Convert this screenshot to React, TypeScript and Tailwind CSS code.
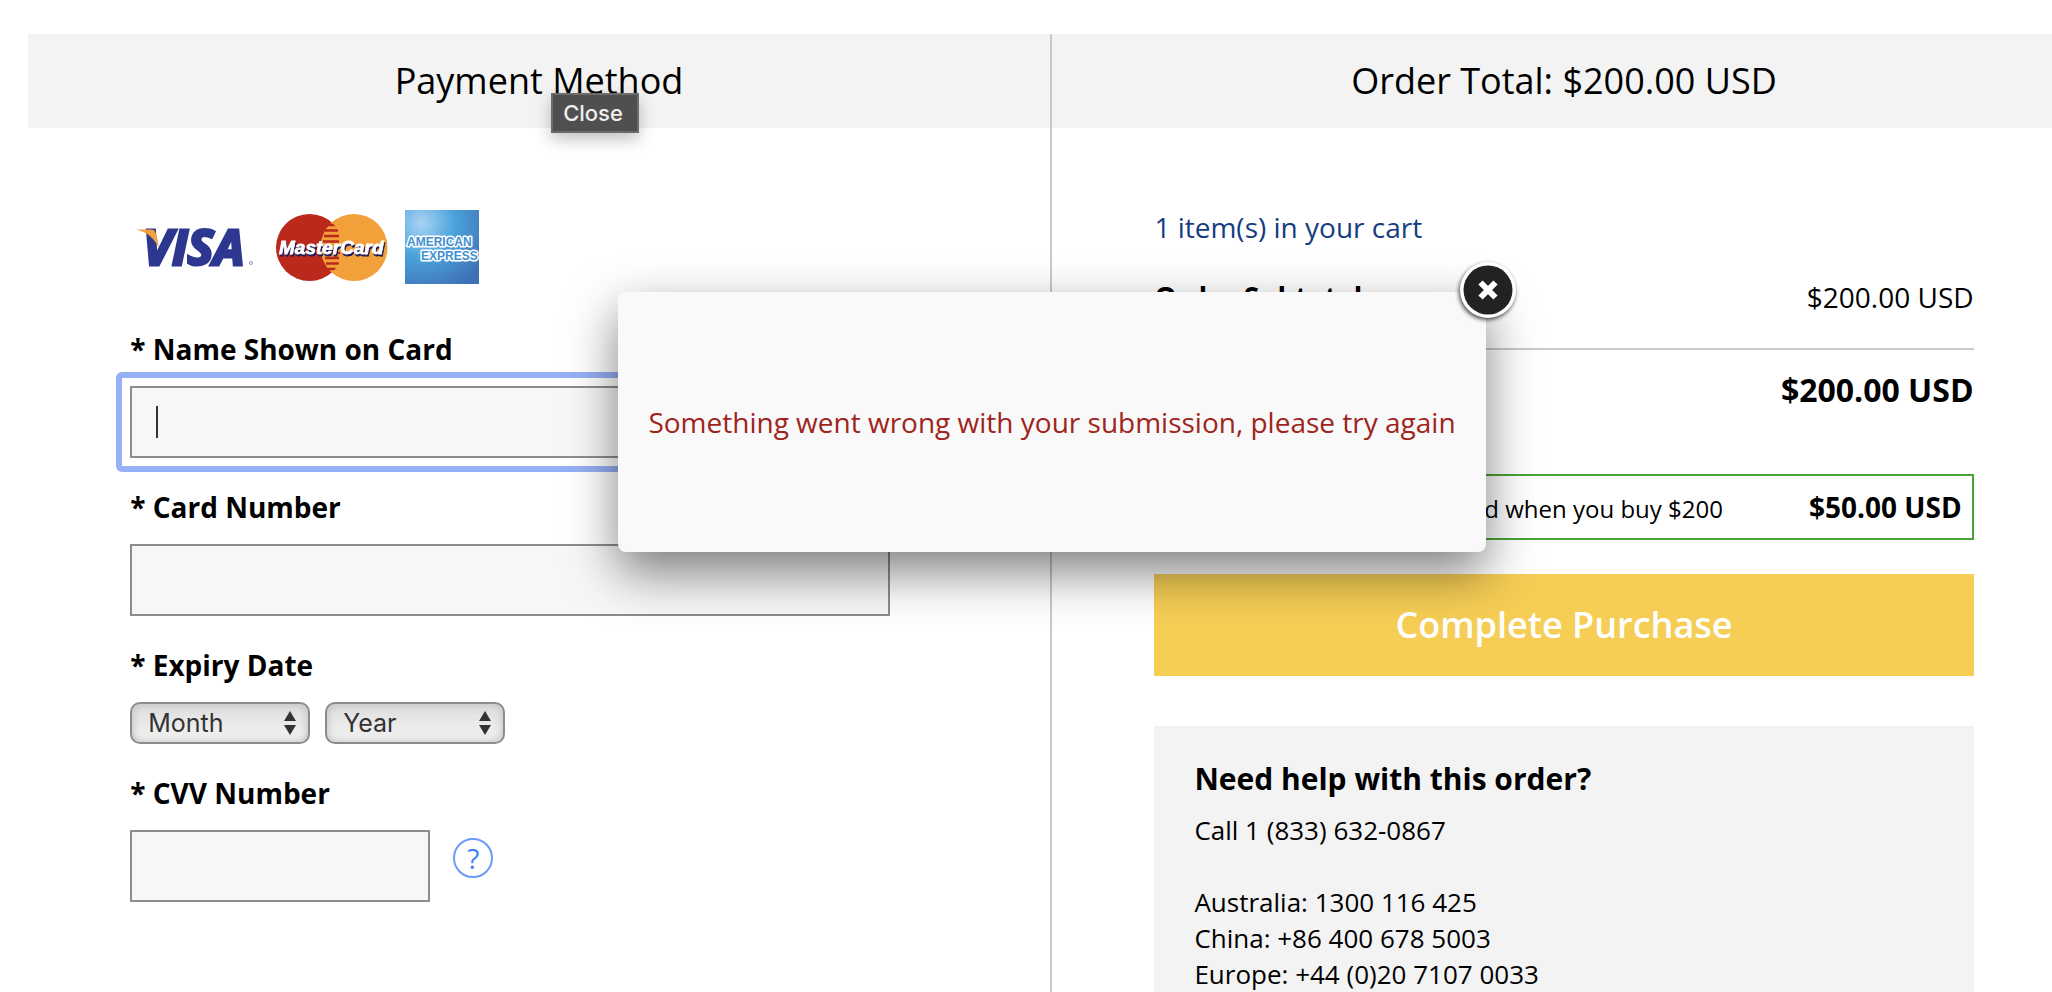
import { useState } from "react";
import type { ReactNode } from "react";

const helpNumbers = [
  "Australia: 1300 116 425",
  "China: +86 400 678 5003",
  "Europe: +44 (0)20 7107 0033",
];

const months = ["01", "02", "03", "04", "05", "06", "07", "08", "09", "10", "11", "12"];
const years = ["2024", "2025", "2026", "2027", "2028", "2029", "2030"];

const inputClass = "h-[72px] border-2 border-[#8c8c8c] bg-[#f7f7f7] px-6 text-[28px] outline-none";
const labelClass = "mb-[17px] block text-[28px] leading-10 font-bold";

function VisaLogo() {
  return (
    <svg width="120" height="74" viewBox="0 0 120 74" role="img" aria-label="Visa">
      <text
        x="7"
        y="55"
        fontFamily="Open Sans, sans-serif"
        fontWeight="700"
        fontStyle="italic"
        fontSize="49"
        fill="#2e3790"
        stroke="#2e3790"
        strokeWidth="3"
      >
        VISA
      </text>
      <path d="M0 19.5h15c5 0 5 4 8 18C18 29 12 22 0 19.500z" fill="#f0a03c" />
      <circle cx="115" cy="53" r="1.500" fill="none" stroke="#8b90c4" strokeWidth="1" />
    </svg>
  );
}

function MasterCardLogo() {
  return (
    <svg width="112" height="74" viewBox="0 0 112 74" role="img" aria-label="MasterCard">
      <defs>
        <clipPath id="mc-left">
          <circle cx="33.500" cy="37.500" r="33.500" />
        </clipPath>
      </defs>
      <circle cx="33.500" cy="37.500" r="33.500" fill="#bb281c" />
      <circle cx="78" cy="37.500" r="33.500" fill="#f1a03a" />
      <g clipPath="url(#mc-left)" stroke="#bb281c" strokeWidth="2.500">
        <path d="M51 15h16M49 20.500h13M48 26h15M47 31.500h16" />
        <path d="M50 43h14M49 48h14M50 53.500h13M52 59h11" />
      </g>
      <text
        x="3"
        y="44"
        fontFamily="Liberation Sans, sans-serif"
        fontWeight="700"
        fontStyle="italic"
        fontSize="19"
        fill="#fff"
        stroke="#fff"
        strokeWidth="0.800"
        className="drop-shadow-[1px_2px_0_#1d1a5b]"
      >
        MasterCard
      </text>
    </svg>
  );
}

function AmexLogo() {
  return (
    <svg width="74" height="74" viewBox="0 0 74 74" role="img" aria-label="American Express">
      <defs>
        <radialGradient id="amex-bg" cx="0.220" cy="0.180" r="1">
          <stop offset="0" stopColor="#a9d3f2" />
          <stop offset="0.450" stopColor="#4ba3dc" />
          <stop offset="1" stopColor="#3f6fb5" />
        </radialGradient>
      </defs>
      <rect width="74" height="74" fill="url(#amex-bg)" />
      <g
        fontFamily="Liberation Sans, sans-serif"
        fontWeight="700"
        fontSize="12"
        fill="#3f8fd0"
        stroke="#fff"
        strokeWidth="3"
        strokeLinejoin="round"
        paintOrder="stroke"
      >
        <text x="2" y="36">
          AMERICAN
        </text>
        <text x="16" y="50">
          EXPRESS
        </text>
      </g>
    </svg>
  );
}

function PanelHeading({ children }: { children: ReactNode }) {
  return <h2 className="flex h-[94px] items-center justify-center bg-[#f3f3f3] text-4xl">{children}</h2>;
}

type SelectProps = {
  label: string;
  options: string[];
};

function DateSelect({ label, options }: SelectProps) {
  return (
    <div className="relative w-[180px]">
      <select
        aria-label={label}
        className="h-[42px] w-full appearance-none rounded-[10px] border-2 border-[#8c8c8c] bg-linear-to-b from-[#dedede] to-[#f4f4f4] pl-4 font-['Inter',sans-serif] text-[25px] leading-8 text-[#333] shadow-[inset_0_0_10px_#bbb]"
      >
        <option>{label}</option>
        {options.map((option) => (
          <option key={option}>{option}</option>
        ))}
      </select>
      <svg className="pointer-events-none absolute top-[9px] right-[14px]" width="12" height="24" viewBox="0 0 12 24" fill="#333">
        <path d="M6 0l6 10H0zM6 24l6-10H0z" />
      </svg>
    </div>
  );
}

function PaymentMethod() {
  return (
    <section className="border-r-2 border-[#c9c9c9]">
      <PanelHeading>Payment Method</PanelHeading>
      <form className="pt-[82px] pr-40 pl-[10%]">
        <div className="flex items-center pl-1.5">
          <VisaLogo />
          <div className="ml-5">
            <MasterCardLogo />
          </div>
          <div className="ml-[17px]">
            <AmexLogo />
          </div>
        </div>

        <div className="mt-[45px]">
          <label htmlFor="name" className={labelClass}>
            * Name Shown on Card
          </label>
          <div className="relative">
            <input id="name" type="text" className={`${inputClass} block w-full`} />
            {/* focus ring and text caret */}
            <span className="pointer-events-none absolute -inset-3.5 rounded-md border-[6px] border-[#95b0f5]" />
            <span className="absolute top-5 left-[26px] h-8 w-0.5 bg-[#333]" />
          </div>
        </div>

        <div className="mt-[29px]">
          <label htmlFor="card-number" className={labelClass}>
            * Card Number
          </label>
          <input id="card-number" type="text" className={`${inputClass} block w-full`} />
        </div>

        <fieldset className="mt-[29px]">
          <legend className={labelClass}>* Expiry Date</legend>
          <div className="flex gap-[15px]">
            <DateSelect label="Month" options={months} />
            <DateSelect label="Year" options={years} />
          </div>
        </fieldset>

        <div className="mt-[29px]">
          <label htmlFor="cvv" className={labelClass}>
            * CVV Number
          </label>
          <div className="flex gap-[23px]">
            <input id="cvv" type="text" className={`${inputClass} w-[300px]`} />
            <button
              type="button"
              className="mt-2 flex size-10 items-center justify-center rounded-full border-2 border-[#6a9bf9] text-[28px] leading-none text-[#3f7ff7]"
            >
              ?
            </button>
          </div>
        </div>
      </form>
    </section>
  );
}

function OrderSummary() {
  return (
    <section className="flex flex-col">
      <PanelHeading>Order Total: $200.00 USD</PanelHeading>
      <div className="flex grow flex-col px-[10%] pt-[79px]">
        <a href="#cart" className="text-[28px] leading-10 text-[#153d7f]">
          1 item(s) in your cart
        </a>
        <div className="mt-[30px] flex justify-between border-b-2 border-[#c9c9c9] pb-[31px] text-[28px] leading-10">
          <span className="font-bold">Order Subtotal</span>
          <span>$200.00 USD</span>
        </div>
        <p className="mt-5 text-right text-[32px] leading-10 font-bold">$200.00 USD</p>
        <div className="mt-16 flex h-[66px] items-baseline border-2 border-[#4aa336] pt-[11px] pr-2.5">
          <span className="grow pr-[86px] text-right text-2xl">Reward when you buy $200</span>
          <span className="text-[28px] leading-10 font-bold">$50.00 USD</span>
        </div>
        <button type="button" className="mt-[34px] h-[102px] bg-[#f6ce55] text-4xl font-semibold text-white">
          Complete Purchase
        </button>
        <div className="mt-[50px] grow bg-[#f3f3f3] px-10 pt-[33px] text-[26px] leading-9">
          <h3 className="mb-[13px] text-[30px] leading-10 font-bold">Need help with this order?</h3>
          <p>Call 1 (833) 632-0867</p>
          <ul className="mt-9">
            {helpNumbers.map((line) => (
              <li key={line}>{line}</li>
            ))}
          </ul>
        </div>
      </div>
    </section>
  );
}

function ErrorDialog({ onClose }: { onClose: () => void }) {
  return (
    <div className="pointer-events-none absolute inset-x-0 top-[258px] flex justify-center">
      <div
        role="alertdialog"
        aria-label="Error"
        className="pointer-events-auto relative flex h-[260px] items-center rounded-lg bg-[#f9f9f9] px-[30px] shadow-[0_20px_50px_rgba(0,0,0,0.5)]"
      >
        <p className="text-[28px] leading-10 text-[#9f241c]">Something went wrong with your submission, please try again</p>
        <button type="button" aria-label="Close" onClick={onClose} className="absolute -top-[38px] -right-[38px]">
          <svg width="72" height="72" viewBox="0 0 72 72" fill="none" className="drop-shadow-[-1px_2px_2px_rgba(0,0,0,0.7)]">
            <circle cx="36" cy="36" r="28" fill="#fff" />
            <circle cx="36" cy="36" r="24.500" fill="#222" />
            <path d="M28.500 28.500l15 15M43.500 28.500l-15 15" stroke="#fff" strokeWidth="6" />
          </svg>
        </button>
      </div>
    </div>
  );
}

export default function App() {
  const [showError, setShowError] = useState(true);

  return (
    <main className="h-screen overflow-hidden bg-white pt-[34px] pl-7 font-['Open_Sans',sans-serif] text-black">
      <div className="relative -mr-6 grid h-full grid-cols-2">
        <PaymentMethod />
        <OrderSummary />
        {showError && (
          <>
            <ErrorDialog onClose={() => setShowError(false)} />
            <div
              role="tooltip"
              className="absolute top-[59px] left-[523px] flex h-10 w-[88px] items-center justify-center border-2 border-[#6b6b6b] bg-[#4f4f4f] pr-1 font-['Inter',sans-serif] text-[22px] font-medium text-[#eee] shadow-[0_6px_16px_rgba(0,0,0,0.25)]"
            >
              Close
            </div>
          </>
        )}
      </div>
    </main>
  );
}
